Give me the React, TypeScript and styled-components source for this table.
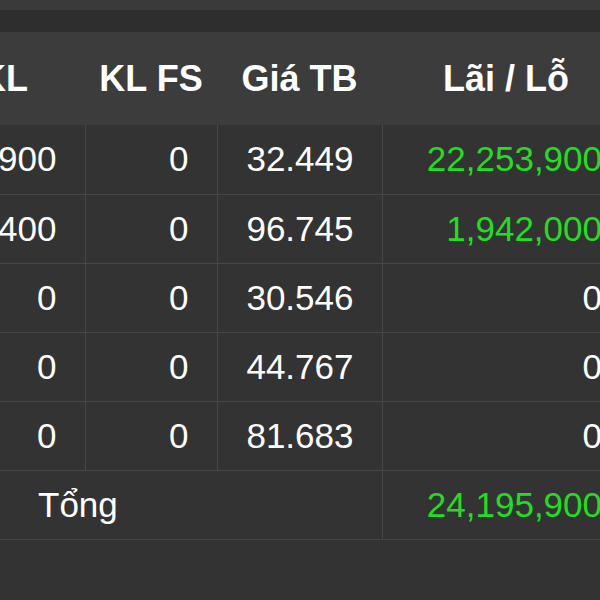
import styled, { createGlobalStyle } from 'styled-components';

const GlobalStyle = createGlobalStyle`
  html, body {
    margin: 0;
    padding: 0;
    background: #333333;
  }
`;

const Frame = styled.div`
  width: 600px;
  height: 600px;
  overflow: hidden;
  background: #333333;
  font-family: 'Liberation Sans', Arial, sans-serif;
  color: #ffffff;
`;

const TopEdge = styled.div`
  height: 10px;
  background: #3a3a3a;
`;

const TopBand = styled.div`
  height: 22px;
  background: #2e2e2e;
`;

// the table runs past both edges of the view, like the cropped grid it comes from
const Table = styled.table`
  table-layout: fixed;
  width: 707px;
  margin-left: -77px;
  border-collapse: collapse;
  border-spacing: 0;
`;

const HeadCell = styled.th`
  height: 93px;
  padding: 0;
  background: #3c3c3c;
  font-size: 36px;
  font-weight: 700;
  text-align: center;
  white-space: nowrap;
`;

const Row = styled.tr`
  height: 69px;
  border-bottom: 1px solid #474747;
`;

const Cell = styled.td<{ $green?: boolean; $last?: boolean }>`
  padding: 0 28px 0 0;
  font-size: 35px;
  text-align: right;
  white-space: nowrap;
  color: ${(p) => (p.$green ? '#22dd22' : '#ffffff')};
  border-right: ${(p) => (p.$last ? 'none' : '1px solid #474747')};
`;

const TotalLabel = styled.td`
  padding: 0 0 0 115px;
  font-size: 35px;
  text-align: left;
  border-right: 1px solid #474747;
`;

const rows = [
  { kl: '32,900', fs: '0', avg: '32.449', pnl: '22,253,900', up: true },
  { kl: '6,400', fs: '0', avg: '96.745', pnl: '1,942,000', up: true },
  { kl: '0', fs: '0', avg: '30.546', pnl: '0', up: false },
  { kl: '0', fs: '0', avg: '44.767', pnl: '0', up: false },
  { kl: '0', fs: '0', avg: '81.683', pnl: '0', up: false },
];

export default function App() {
  return (
    <Frame>
      <GlobalStyle />
      <TopEdge />
      <TopBand />
      <Table>
        <colgroup>
          <col style={{ width: 162 }} />
          <col style={{ width: 132 }} />
          <col style={{ width: 165 }} />
          <col style={{ width: 248 }} />
        </colgroup>
        <thead>
          <tr>
            <HeadCell>KL</HeadCell>
            <HeadCell>KL FS</HeadCell>
            <HeadCell>Giá TB</HeadCell>
            <HeadCell>Lãi / Lỗ</HeadCell>
          </tr>
        </thead>
        <tbody>
          {rows.map((r, i) => (
            <Row key={i}>
              <Cell>{r.kl}</Cell>
              <Cell>{r.fs}</Cell>
              <Cell>{r.avg}</Cell>
              <Cell $green={r.up} $last>
                {r.pnl}
              </Cell>
            </Row>
          ))}
          <Row>
            <TotalLabel colSpan={3}>Tổng</TotalLabel>
            <Cell $green $last>
              24,195,900
            </Cell>
          </Row>
        </tbody>
      </Table>
    </Frame>
  );
}
